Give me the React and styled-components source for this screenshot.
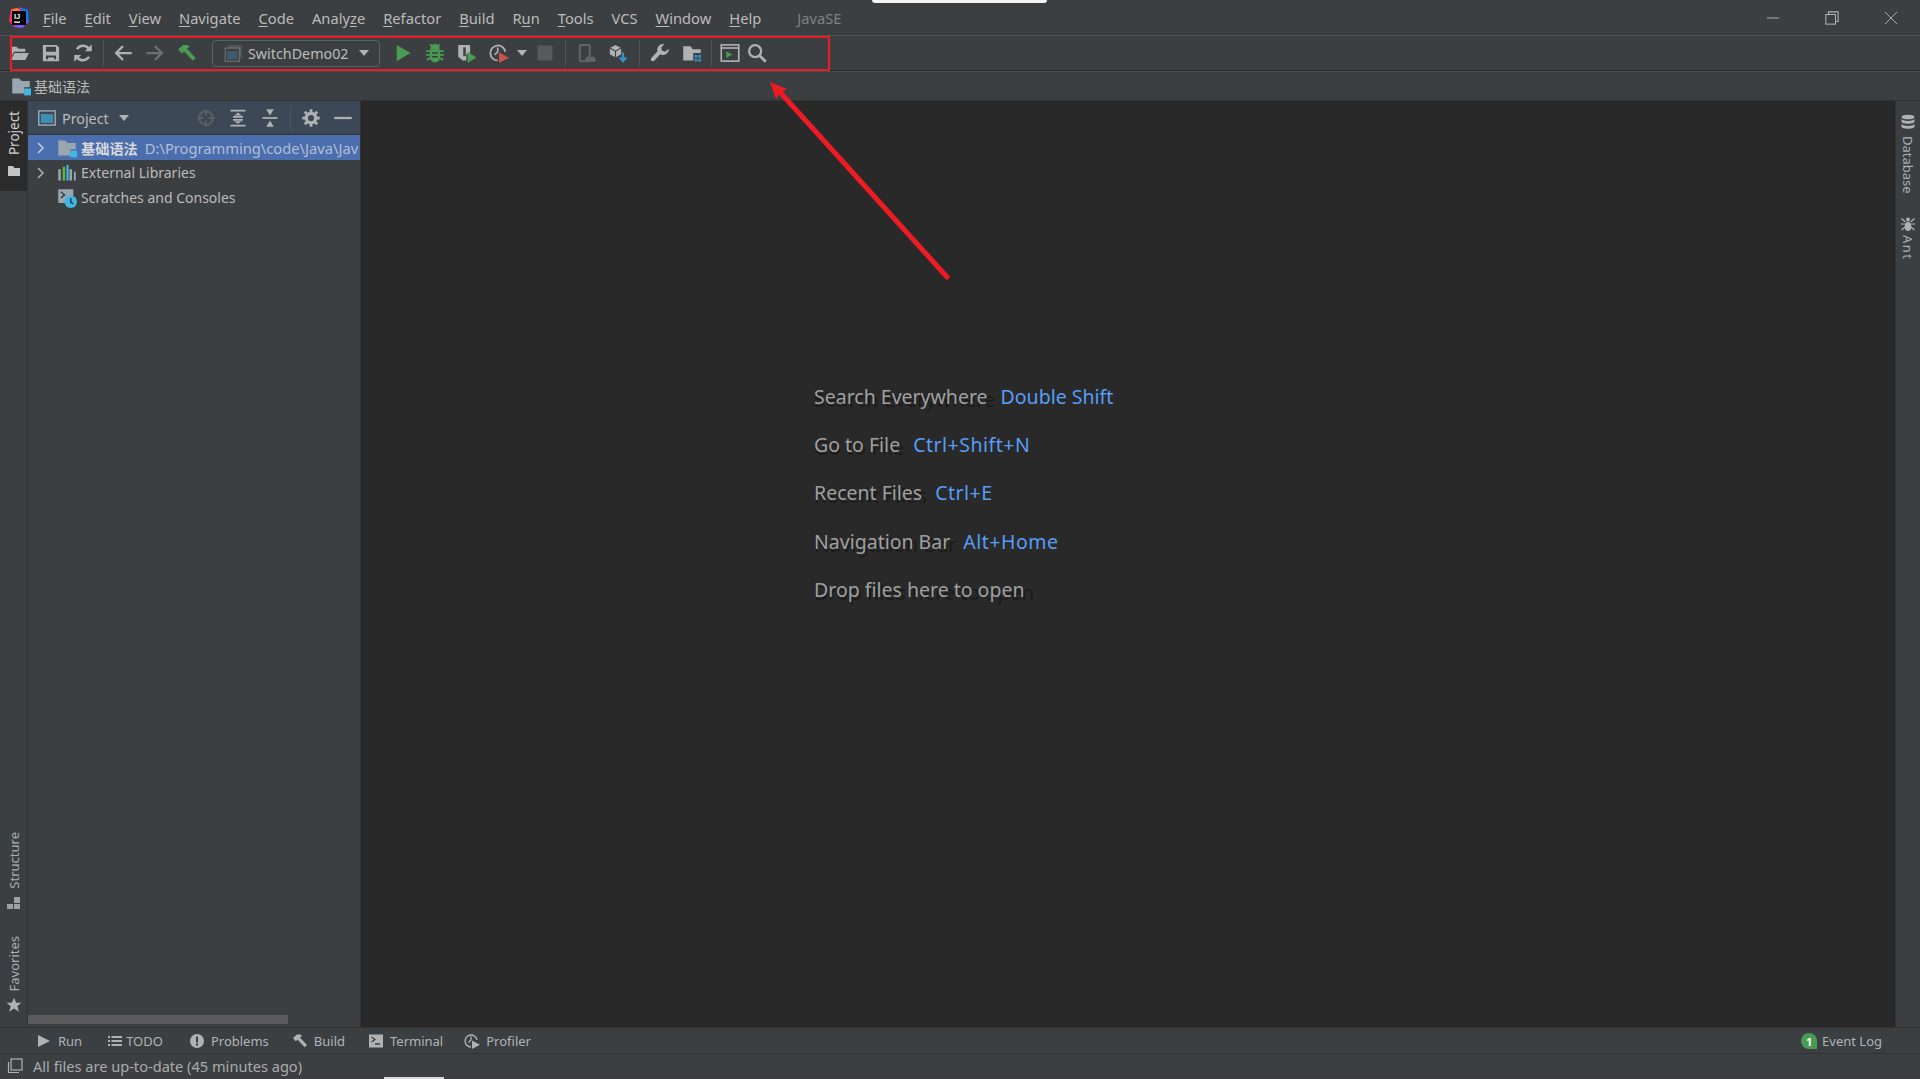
import React from "react";
import styled, { createGlobalStyle, css } from "styled-components";

const GlobalStyle = createGlobalStyle`
  html, body {
    margin: 0;
    padding: 0;
    background: #3c3f41;
  }
  * {
    box-sizing: border-box;
  }
`;

const FONT = `"Noto Sans", "Noto Sans CJK SC", sans-serif`;

const Page = styled.div`
  position: relative;
  display: flex;
  flex-direction: column;
  width: 1920px;
  height: 1079px;
  overflow: hidden;
  background: #3c3f41;
  color: #bbbbbb;
  font-family: ${FONT};
  font-size: 14px;
`;

const TitleBar = styled.div`
  display: flex;
  align-items: center;
  height: 36px;
  padding-left: 8px;
  border-bottom: 1px solid #515355;
`;

const Logo = styled.svg`
  width: 22px;
  height: 22px;
  margin-right: 4px;
`;

const MenuItem = styled.span`
  padding: 0 9px;
  font-size: 14.7px;
  color: #bbbbbb;
  u {
    text-underline-offset: 2px;
  }
`;

const ProjectName = styled.span`
  margin-left: 27px;
  font-size: 14.7px;
  color: #7f8284;
`;

const WindowControls = styled.div`
  display: flex;
  margin-left: auto;
`;

const WindowButton = styled.div`
  display: flex;
  align-items: center;
  justify-content: center;
  width: 59px;
  height: 35px;
  svg {
    width: 14px;
    height: 14px;
  }
`;

const Toolbar = styled.div`
  display: flex;
  align-items: center;
  height: 35px;
  padding-left: 3px;
  border-bottom: 1px solid #2b2b2b;
`;

const ToolIcon = styled.div`
  display: flex;
  flex: none;
  align-items: center;
  justify-content: center;
  width: ${(p) => p.$w || 32}px;
  height: 32px;
  svg {
    width: 20px;
    height: 20px;
  }
`;

const Separator = styled.div`
  flex: none;
  width: 1px;
  height: 26px;
  margin: 0 ${(p) => p.$gap}px;
  background: #515355;
`;

const RunCombo = styled.div`
  display: flex;
  flex: none;
  align-items: center;
  width: 168px;
  height: 27px;
  margin: 0 7px 0 9px;
  padding: 0 10px 0 11px;
  border: 1px solid #5e6060;
  border-radius: 4px;
  font-size: 14.3px;
  svg {
    width: 19px;
    height: 19px;
    margin-right: 5px;
  }
`;

const Caret = styled.span`
  width: 0;
  height: 0;
  margin-left: auto;
  border-left: 5px solid transparent;
  border-right: 5px solid transparent;
  border-top: 6px solid #afb1b3;
`;

const NavBar = styled.div`
  display: flex;
  align-items: center;
  height: 30px;
  padding-left: 11px;
  border-top: 1px solid #4a4d4f;
  border-bottom: 1px solid #323232;
  font-size: 14px;
  svg {
    width: 20px;
    height: 20px;
    margin-right: 3px;
  }
`;

const Main = styled.div`
  display: flex;
  flex: 1;
  min-height: 0;
`;

const LeftStrip = styled.div`
  display: flex;
  flex: none;
  flex-direction: column;
  justify-content: space-between;
  width: 28px;
  border-right: 1px solid #323232;
`;

const RightStrip = styled.div`
  flex: none;
  width: 25px;
  padding-top: 13px;
  border-left: 1px solid #323232;
`;

const StripTab = styled.div`
  display: flex;
  flex-direction: ${(p) => (p.$side === "right" ? "column" : "column-reverse")};
  align-items: center;
  gap: ${(p) => p.$gap ?? 6}px;
  padding: ${(p) => p.$pad || "0"};
  background: ${(p) => (p.$active ? "#2b2b2b" : "transparent")};
  color: ${(p) => (p.$active ? "#d0d0d0" : "#a9afb3")};
  svg {
    width: 16px;
    height: 16px;
    flex: none;
  }
`;

const StripLabel = styled.span`
  font-size: ${(p) => p.$size || 13}px;
  line-height: 16px;
  letter-spacing: ${(p) => p.$spread || 0}px;
  writing-mode: vertical-rl;
  ${(p) =>
    p.$side !== "right" &&
    css`
      transform: rotate(180deg);
    `}
`;

const ProjectPanel = styled.div`
  display: flex;
  flex: none;
  flex-direction: column;
  width: 333px;
  border-right: 1px solid #323232;
`;

const PanelHeader = styled.div`
  display: flex;
  align-items: center;
  height: 34px;
  padding-left: 10px;
  padding-top: 1px;
  background: #3c4855;
  border-bottom: 1px solid #323232;
  font-size: 14.3px;
`;

const PanelTitleIcon = styled.svg`
  width: 18px;
  height: 18px;
  margin-right: 6px;
`;

const HeaderCaret = styled(Caret)`
  margin-left: 10px;
  margin-right: 61px;
`;

const HeaderIcon = styled.div`
  display: flex;
  align-items: center;
  justify-content: center;
  width: 32px;
  svg {
    width: 20px;
    height: 20px;
  }
`;

const HeaderDivider = styled.div`
  width: 1px;
  height: 26px;
  margin: 0 4px;
  background: #4a5662;
`;

const Tree = styled.div`
  flex: 1;
`;

const TreeRow = styled.div`
  display: flex;
  align-items: center;
  height: 25px;
  padding-left: 8px;
  white-space: nowrap;
  overflow: hidden;
  font-size: 14px;
  background: ${(p) => (p.$selected ? "#4b6eaf" : "transparent")};
  color: ${(p) => (p.$selected ? "#d8d8d8" : "#bbbbbb")};
`;

const Chevron = styled.svg`
  flex: none;
  width: 10px;
  height: 14px;
  margin-right: 11px;
  visibility: ${(p) => (p.$hidden ? "hidden" : "visible")};
`;

const TreeIcon = styled.svg`
  flex: none;
  width: 20px;
  height: 20px;
  margin-right: 4px;
`;

const TreeName = styled.strong`
  font-size: 14.2px;
`;

const TreePath = styled.span`
  margin-left: 7px;
  font-size: 14.7px;
  color: #b4bfd2;
`;

const ScrollTrack = styled.div`
  flex: none;
  height: 13px;
  padding: 1px 0 3px;
`;

const ScrollThumb = styled.div`
  width: 260px;
  height: 9px;
  background: #595b5d;
`;

const Editor = styled.div`
  flex: 1;
  padding: 271px 0 0 453px;
  background: #292929;
`;

const HintRow = styled.div`
  display: flex;
  align-items: center;
  gap: 13px;
  height: 48.3px;
  font-size: 19.5px;
`;

const HintLabel = styled.span`
  position: relative;
  z-index: 0;
  color: #a0a0a0;
  &::before {
    content: attr(data-ghost);
    position: absolute;
    left: 0;
    top: 2px;
    z-index: -1;
    font-size: 20.4px;
    line-height: inherit;
    white-space: nowrap;
    color: #1c1c1c;
  }
`;

const HintKey = styled.span`
  letter-spacing: ${(p) => (p.$combo ? 0.5 : 0)}px;
  color: #589df6;
`;

const ToolWindowBar = styled.div`
  display: flex;
  flex: none;
  align-items: center;
  height: 27px;
  padding: 1px 38px 0 0;
  border-top: 1px solid #323232;
  border-bottom: 1px solid #323232;
  font-size: 13px;
`;

const ToolTab = styled.div`
  display: flex;
  align-items: center;
  gap: ${(p) => p.$gap ?? 6}px;
  margin-left: ${(p) => p.$left ?? 23}px;
  white-space: nowrap;
  color: #b0b4b8;
  ${(p) =>
    p.$push &&
    css`
      margin-left: auto;
    `}
  svg {
    width: 16px;
    height: 16px;
    flex: none;
  }
`;

const StatusBar = styled.div`
  display: flex;
  flex: none;
  align-items: center;
  gap: 10px;
  height: 25px;
  padding-left: 7px;
  padding-bottom: 1px;
  font-size: 14.6px;
  color: #a8abad;
  svg {
    width: 16px;
    height: 16px;
  }
`;

const Badge = styled.span`
  display: flex;
  align-items: center;
  justify-content: center;
  width: 16px;
  height: 16px;
  border-radius: 8px 8px 0 8px;
  background: #499c54;
  color: #ffffff;
  font-size: 11px;
  font-weight: 700;
`;

const AnnotationBox = styled.div`
  position: absolute;
  left: 10px;
  top: 36px;
  width: 820px;
  height: 35px;
  border: 2px solid #ed1c24;
  pointer-events: none;
`;

const AnnotationArrow = styled.svg`
  position: absolute;
  left: 0;
  top: 0;
  width: 1920px;
  height: 1079px;
  pointer-events: none;
`;

const TopSliver = styled.div`
  position: absolute;
  left: 872px;
  top: 0;
  width: 175px;
  height: 3px;
  border-radius: 0 0 3px 3px;
  background: #f4f4f4;
`;

const BottomSliver = styled.div`
  position: absolute;
  left: 384px;
  bottom: 0;
  width: 60px;
  height: 2px;
  background: #d8d8d8;
`;

const GRAY = "#afb1b3";
const DIM = "#6e7072";
const GREEN = "#499c54";
const RED = "#c75450";
const BLUE = "#3592c4";
const CYAN = "#40b6e0";

const Svg = ({ children, box = 16 }) => (
  <svg viewBox={`0 0 ${box} ${box}`} fill="none">
    {children}
  </svg>
);

const FolderOpenIcon = () => (
  <Svg>
    <path d="M1 3h5l1.5 1.5H13V7H4L1 13z" fill={GRAY} />
    <path d="M4.5 8H16l-3 5.5H1.5z" fill={GRAY} />
  </Svg>
);

const SaveIcon = () => (
  <Svg>
    <path fillRule="evenodd" d="M1.5 1.5h11l2 2v11h-13zM4 3v4h8V3zM4 10v3h1.500v-1.500h5V13H12v-3z" fill={GRAY} />
  </Svg>
);

const SyncIcon = () => (
  <Svg>
    <path d="M13 5.5A5.5 5.5 0 0 0 3.2 5" stroke={GRAY} strokeWidth="2" />
    <path d="M3 10.5A5.5 5.5 0 0 0 12.8 11" stroke={GRAY} strokeWidth="2" />
    <path d="M9.5 6.5H15V1zM6.5 9.5H1V15z" fill={GRAY} />
  </Svg>
);

const ArrowIcon = ({ dir, color }) => (
  <Svg>
    <g transform={dir === "right" ? "rotate(180 8 8)" : undefined}>
      <path d="M2 8h13M8 2.5L2.5 8 8 13.5" stroke={color} strokeWidth="1.8" />
    </g>
  </Svg>
);

const HammerIcon = ({ color = GREEN }) => (
  <Svg>
    <path d="M1 5l4-3.5h3.500l1.500 1.500-2 1.500 7 7.500-2.300 2.200-7-7.500-2 1.600z" fill={color} />
  </Svg>
);

const RunIcon = ({ color = GREEN }) => (
  <Svg>
    <path d="M3 1.5l11 6.500-11 6.500z" fill={color} />
  </Svg>
);

const BugIcon = () => (
  <Svg>
    <path d="M4.5 5h7a4 4 0 0 1 .5 2v4.500a4 4 0 0 1-8 0V7a4 4 0 0 1 .5-2z" fill={GREEN} />
    <path d="M5 4.5a3 3 0 0 1 6 0zM1 6.500h3M12 6.500h3M1 9.500h3M12 9.500h3M1.500 13.500L4 12M14.500 13.500L12 12M4 1l2 2M12 1l-2 2" stroke={GREEN} strokeWidth="1.4" fill={GREEN} />
    <path d="M5.5 8h5M5.500 11h5" stroke="#3c3f41" strokeWidth="1.2" />
  </Svg>
);

const CoverageIcon = () => (
  <Svg>
    <path d="M1 1.5h9.500v6L7.500 9v5L4.500 14 1 11z" fill={GRAY} />
    <path d="M5 3.5h2v7H5z" fill="#3c3f41" />
    <path d="M8.5 7l7 4.500-7 4.500z" fill={GREEN} />
  </Svg>
);

const ProfileRunIcon = ({ color = RED }) => (
  <Svg>
    <path d="M7 14A6 6 0 1 1 13 7" stroke={GRAY} strokeWidth="1.4" />
    <path d="M7 3.5V7l-2.500 2.500" stroke={GRAY} strokeWidth="1.3" />
    <path d="M8 7.5l8 4.300-8 4.200z" fill={color} />
  </Svg>
);

const SmallCaret = styled(Caret)`
  margin: 0;
`;

const StopIcon = () => (
  <Svg>
    <rect x="2" y="2" width="12" height="12" fill="#59595a" />
  </Svg>
);

const AttachIcon = () => (
  <Svg>
    <rect x="3" y="1.5" width="8" height="13" rx="1" stroke="#626466" strokeWidth="1.6" />
    <path d="M8 11h7l1 4H7z" fill="#626466" />
  </Svg>
);

const SdkIcon = () => (
  <Svg>
    <path d="M1.5 4L6 1.500 10.500 4v5L6 11.500 1.500 9z" fill={GRAY} />
    <path d="M6 6.5L1.500 4M6 6.500l4.500-2.500M6 6.500v5" stroke="#3c3f41" strokeWidth="0.9" />
    <path d="M12 7.5v6M9.500 11.500l2.500 3 2.500-3" stroke={BLUE} strokeWidth="1.8" />
  </Svg>
);

const WrenchIcon = () => (
  <Svg>
    <path d="M15 4.5l-3 2.500-2.500-1L9 3.500 11.500 1A4.500 4.500 0 0 0 6 6.500L1 12l-.3 2.200 2.300.3 5.200-5.600A4.500 4.500 0 0 0 15 4.500z" fill={GRAY} />
  </Svg>
);

const ProjectStructureIcon = () => (
  <Svg>
    <path d="M1 2.5h6L8.500 5H15v3H9v6H1z" fill={GRAY} />
    <path d="M10 9.5h2.300v2.300H10zM13 9.500h2.300v2.300H13zM10 12.500h2.300v2.300H10zM13 12.500h2.300v2.300H13z" fill={BLUE} />
  </Svg>
);

const RunAnythingIcon = () => (
  <Svg>
    <rect x="1" y="1.5" width="14" height="13" stroke={GRAY} strokeWidth="1.3" />
    <path d="M1 4h14" stroke={GRAY} strokeWidth="1.3" />
    <path d="M5 6.5l5 2.700L5 12z" fill={GREEN} />
  </Svg>
);

const SearchIcon = () => (
  <Svg>
    <circle cx="6.5" cy="6.5" r="4.8" stroke={GRAY} strokeWidth="1.8" />
    <path d="M10 10l5 5" stroke={GRAY} strokeWidth="2.2" />
  </Svg>
);

const ModuleFolder = ({ as: Tag = "svg", ...props }) => (
  <Tag viewBox="0 0 16 16" fill="none" {...props}>
    <path d="M1 2h5.500L8.500 4H15v5h-4.500v5H1z" fill="#9aa7b0" />
    <rect x="10.5" y="10" width="5.5" height="5.5" fill={CYAN} />
  </Tag>
);

const Logomark = () => (
  <Logo viewBox="0 0 22 22">
    <path d="M3 2l9-1.500 3 3-3 3z" fill="#fe315d" />
    <path d="M12 .5L20 3l1 12-6-5z" fill="#087cfa" />
    <path d="M1 14L3 2l9 5-6 13z" fill="#fe315d" />
    <path d="M6 20l6-13 9 8-7 6z" fill="#7f52ff" />
    <path d="M3 3l6-2 5 5-7 7z" fill="#fdb60d" opacity="0.55" />
    <rect x="4" y="4" width="14" height="14" fill="#000000" />
    <text x="6" y="11.5" fill="#ffffff" fontSize="7.5" fontWeight="700" fontFamily="Liberation Sans, sans-serif">IJ</text>
    <rect x="6" y="14.5" width="6" height="1.3" fill="#ffffff" />
  </Logo>
);

const menus = [
  ["F", "ile"], ["E", "dit"], ["V", "iew"], ["N", "avigate"], ["C", "ode"],
  ["", "Analy", "z", "e"], ["R", "efactor"], ["B", "uild"], ["", "R", "u", "n"],
  ["T", "ools"], ["", "VCS"], ["W", "indow"], ["H", "elp"],
];

const hints = [
  ["Search Everywhere", "Double Shift"],
  ["Go to File", "Ctrl+Shift+N"],
  ["Recent Files", "Ctrl+E"],
  ["Navigation Bar", "Alt+Home"],
  ["Drop files here to open", null],
];

function App() {
  return (
    <Page>
      <GlobalStyle />
      <TitleBar>
        <Logomark />
        {menus.map(([a, b, c, d]) => (
          <MenuItem key={a + b}>
            {a && <u>{a}</u>}
            {b}
            {c && <u>{c}</u>}
            {d}
          </MenuItem>
        ))}
        <ProjectName>JavaSE</ProjectName>
        <WindowControls>
          <WindowButton>
            <Svg><path d="M1 8h14" stroke={GRAY} strokeWidth="1.1" /></Svg>
          </WindowButton>
          <WindowButton>
            <Svg>
              <rect x="1" y="4" width="11" height="11" stroke={GRAY} strokeWidth="1.2" />
              <path d="M4 4V1h11v11h-3" stroke={GRAY} strokeWidth="1.2" />
            </Svg>
          </WindowButton>
          <WindowButton>
            <Svg><path d="M1 1l14 14M15 1L1 15" stroke={GRAY} strokeWidth="1.1" /></Svg>
          </WindowButton>
        </WindowControls>
      </TitleBar>

      <Toolbar>
        <ToolIcon><FolderOpenIcon /></ToolIcon>
        <ToolIcon><SaveIcon /></ToolIcon>
        <ToolIcon><SyncIcon /></ToolIcon>
        <Separator $gap={3.5} />
        <ToolIcon><ArrowIcon dir="left" color={GRAY} /></ToolIcon>
        <ToolIcon><ArrowIcon dir="right" color={DIM} /></ToolIcon>
        <ToolIcon><HammerIcon /></ToolIcon>
        <RunCombo>
          <Svg>
            <rect x="3" y="1" width="12" height="11" fill="#55585a" />
            <rect x="1" y="3.5" width="12" height="11" fill="#3c3f41" stroke="#6b6e70" />
            <rect x="2.5" y="6" width="9" height="7" fill="#3f5a6b" />
          </Svg>
          SwitchDemo02
          <Caret />
        </RunCombo>
        <ToolIcon><RunIcon /></ToolIcon>
        <ToolIcon><BugIcon /></ToolIcon>
        <ToolIcon><CoverageIcon /></ToolIcon>
        <ToolIcon><ProfileRunIcon /></ToolIcon>
        <ToolIcon $w={14}><SmallCaret /></ToolIcon>
        <ToolIcon><StopIcon /></ToolIcon>
        <Separator $gap={4} />
        <ToolIcon><AttachIcon /></ToolIcon>
        <ToolIcon><SdkIcon /></ToolIcon>
        <Separator $gap={4.5} />
        <ToolIcon><WrenchIcon /></ToolIcon>
        <ToolIcon><ProjectStructureIcon /></ToolIcon>
        <Separator $gap={2.5} />
        <ToolIcon><RunAnythingIcon /></ToolIcon>
        <ToolIcon $w={22}><SearchIcon /></ToolIcon>
      </Toolbar>

      <NavBar>
        <ModuleFolder />
        基础语法
      </NavBar>

      <Main>
        <LeftStrip>
          <StripTab $active $pad="10px 0 12px" $gap={8}>
            <Svg><path d="M2 3h5l1.5 2H14v8H2z" fill="#c4c4c4" /></Svg>
            <StripLabel $size={13.5}>Project</StripLabel>
          </StripTab>
          <div>
            <StripTab $pad="0 0 25px">
              <Svg>
                <path d="M8 2h6v6H8zM1 9h6v5H1zM8 9h6v5H8z" fill={GRAY} opacity="0.85" />
              </Svg>
              <StripLabel>Structure</StripLabel>
            </StripTab>
            <StripTab $pad="0 0 14px">
              <Svg><path d="M8 .8l2.200 5h5.300l-4.200 3.500 1.600 5.500L8 11.600l-4.900 3.200 1.600-5.500L.5 5.800h5.300z" fill={GRAY} /></Svg>
              <StripLabel>Favorites</StripLabel>
            </StripTab>
          </div>
        </LeftStrip>

        <ProjectPanel>
          <PanelHeader>
            <PanelTitleIcon viewBox="0 0 16 16" fill="none">
              <rect x="0.7" y="1.7" width="14.6" height="12.6" stroke="#9aa7b0" strokeWidth="1.3" />
              <rect x="2.5" y="4.5" width="11" height="8" fill="#3d8fb5" />
            </PanelTitleIcon>
            Project
            <HeaderCaret />
            <HeaderIcon>
              <Svg>
                <circle cx="8" cy="8" r="5.5" stroke="#5d6063" strokeWidth="1.6" />
                <path d="M8 1v5M8 10v5M1 8h5M10 8h5" stroke="#5d6063" strokeWidth="1.6" />
              </Svg>
            </HeaderIcon>
            <HeaderIcon>
              <Svg>
                <path d="M2 2h12M2 14h12M4 7h8M4 9.500h8" stroke={GRAY} strokeWidth="1.4" />
                <path d="M8 3.5L11 6H5zM8 12.500L11 10.500H5z" fill={GRAY} />
              </Svg>
            </HeaderIcon>
            <HeaderIcon>
              <Svg>
                <path d="M2 8h12" stroke={GRAY} strokeWidth="1.4" />
                <path d="M5 1h6L8 6zM5 15h6l-3-5z" fill={GRAY} />
              </Svg>
            </HeaderIcon>
            <HeaderDivider />
            <HeaderIcon>
              <Svg>
                <circle cx="8" cy="8" r="3.8" stroke={GRAY} strokeWidth="2.6" />
                <path d="M8 1v3M8 12v3M1 8h3M12 8h3M3 3l2 2M11 11l2 2M13 3l-2 2M5 11l-2 2" stroke={GRAY} strokeWidth="2.2" />
              </Svg>
            </HeaderIcon>
            <HeaderIcon>
              <Svg><path d="M1 8h14" stroke={GRAY} strokeWidth="1.8" /></Svg>
            </HeaderIcon>
          </PanelHeader>
          <Tree>
            <TreeRow $selected>
              <Chevron viewBox="0 0 10 14" fill="none"><path d="M2 2l5 5-5 5" stroke="#c4c9d4" strokeWidth="1.5" /></Chevron>
              <ModuleFolder as={TreeIcon} />
              <TreeName>基础语法</TreeName>
              <TreePath>D:\Programming\code\Java\Jav</TreePath>
            </TreeRow>
            <TreeRow>
              <Chevron viewBox="0 0 10 14" fill="none"><path d="M2 2l5 5-5 5" stroke={GRAY} strokeWidth="1.5" /></Chevron>
              <TreeIcon viewBox="0 0 16 16" fill="none">
                <path d="M1 5h2v9H1zM10 5h2v9h-2zM13.500 7H15v7h-1.500z" fill="#9aa7b0" />
                <path d="M4.5 3h2v11h-2z" fill="#62b543" />
                <path d="M7.5 1.500h1.800V14H7.500z" fill="#40b6e0" />
              </TreeIcon>
              External Libraries
            </TreeRow>
            <TreeRow>
              <Chevron viewBox="0 0 10 14" $hidden />
              <TreeIcon viewBox="0 0 16 16" fill="none">
                <path d="M1 1h12v7H9v4H1z" fill="#9aa7b0" />
                <path d="M3 3l3 2.500L3 8" stroke="#3c3f41" strokeWidth="1.2" />
                <circle cx="11" cy="11" r="5" fill={CYAN} />
                <path d="M11 8v3.300l2 1.500" stroke="#24404f" strokeWidth="1.2" />
              </TreeIcon>
              Scratches and Consoles
            </TreeRow>
          </Tree>
          <ScrollTrack>
            <ScrollThumb />
          </ScrollTrack>
        </ProjectPanel>

        <Editor>
          {hints.map(([label, key]) => (
            <HintRow key={label}>
              <HintLabel data-ghost={label}>{label}</HintLabel>
              {key && <HintKey $combo={key.includes("+")}>{key}</HintKey>}
            </HintRow>
          ))}
        </Editor>

        <RightStrip>
          <StripTab $side="right" $pad="0 0 22px">
            <Svg>
              <ellipse cx="8" cy="3" rx="6.5" ry="2.3" fill={GRAY} />
              <path d="M1.500 5v2.500c0 1.300 3 2.300 6.500 2.300s6.500-1 6.500-2.300V5c-1 1.300-3.500 2-6.500 2S2.500 6.300 1.500 5zM1.500 10v2.500c0 1.300 3 2.300 6.500 2.300s6.500-1 6.500-2.300V10c-1 1.300-3.500 2-6.500 2s-5.500-.7-6.500-2z" fill={GRAY} />
            </Svg>
            <StripLabel $side="right">Database</StripLabel>
          </StripTab>
          <StripTab $side="right" $gap={3}>
            <Svg>
              <circle cx="8" cy="3.5" r="2" fill={GRAY} />
              <ellipse cx="8" cy="10.5" rx="3.3" ry="4.5" fill={GRAY} />
              <path d="M1.500 2.500l4 3.500M14.500 2.500l-4 3.500M1 8h4M15 8h-4M1.500 14l3.500-3M14.500 14l-3.500-3" stroke={GRAY} strokeWidth="1.2" />
            </Svg>
            <StripLabel $side="right" $spread={1.5}>Ant</StripLabel>
          </StripTab>
        </RightStrip>
      </Main>

      <ToolWindowBar>
        <ToolTab $left={36}>
          <Svg><path d="M2 2l12 6-12 6z" fill={GRAY} /></Svg>
          Run
        </ToolTab>
        <ToolTab $left={25} $gap={3}>
          <Svg><path d="M1 3h2v2H1zM1 7h2v2H1zM1 11h2v2H1zM4.500 3H15v2H4.500zM4.500 7H15v2H4.500zM4.500 11H15v2H4.500z" fill={GRAY} /></Svg>
          TODO
        </ToolTab>
        <ToolTab $left={26}>
          <Svg>
            <circle cx="8" cy="8" r="7" fill={GRAY} />
            <path d="M7 3.500h2v6H7zM7 10.500h2v2H7z" fill="#3c3f41" />
          </Svg>
          Problems
        </ToolTab>
        <ToolTab>
          <HammerIcon color={GRAY} />
          Build
        </ToolTab>
        <ToolTab>
          <Svg>
            <rect x="1" y="1.5" width="14" height="13" fill={GRAY} />
            <path d="M3.500 4l3.500 2.500L3.500 9M7 11h5" stroke="#3c3f41" strokeWidth="1.3" />
          </Svg>
          Terminal
        </ToolTab>
        <ToolTab $left={21}>
          <ProfileRunIcon color={GRAY} />
          Profiler
        </ToolTab>
        <ToolTab $push $gap={5}>
          <Badge>1</Badge>
          Event Log
        </ToolTab>
      </ToolWindowBar>

      <StatusBar>
        <Svg>
          <rect x="4" y="1" width="11" height="11" stroke={GRAY} strokeWidth="1.2" />
          <path d="M1.500 4v10.500H12" stroke={GRAY} strokeWidth="1.2" />
        </Svg>
        All files are up-to-date (45 minutes ago)
      </StatusBar>

      <AnnotationBox />
      <AnnotationArrow viewBox="0 0 1920 1079" fill="none">
        <path d="M947 277L779 91" stroke="#ed1c24" strokeWidth="5" strokeLinecap="round" />
        <path d="M770 82l17 7-7 4-4 6z" fill="#ed1c24" />
      </AnnotationArrow>
      <TopSliver />
      <BottomSliver />
    </Page>
  );
}

export default App;
